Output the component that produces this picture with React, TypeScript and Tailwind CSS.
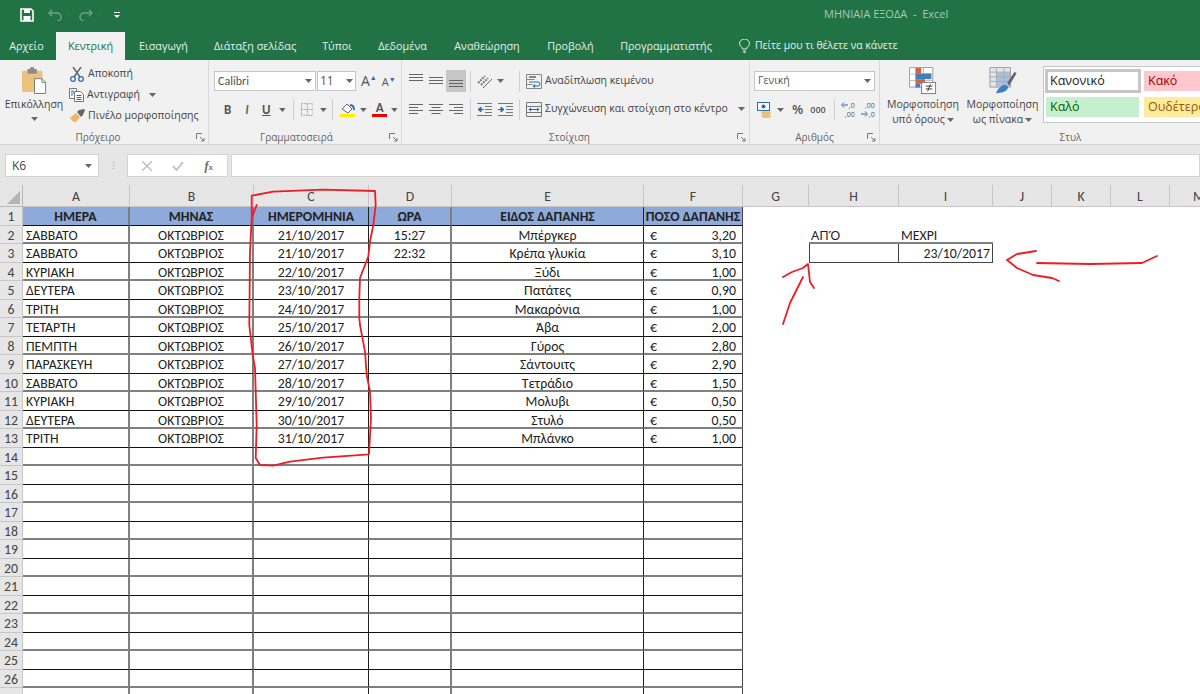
import React from "react";

const ui = { fontFamily: '"Open Sans","Noto Sans",sans-serif' };
const sheet = { fontFamily: 'Carlito,"Lato","Noto Sans",sans-serif' };

const Caret = ({ className = "" }: { className?: string }) => (
  <svg width="7" height="4" viewBox="0 0 7 4" className={className}><path d="M0 0h7L3.5 4z" fill="#666" /></svg>
);

const Launcher = () => (
  <svg width="9" height="9" viewBox="0 0 9 9" className="shrink-0"><path d="M.5 6V.5H6M4 4l4 4M8 5v3H5" stroke="#777" fill="none" /></svg>
);

const Lines = ({ kind }: { kind: "l" | "c" | "r" }) => {
  const w = [14, 9, 14, 9];
  return (
    <svg width="14" height="12" viewBox="0 0 14 12">
      {w.map((v, i) => {
        const x = kind === "l" ? 0 : kind === "r" ? 14 - v : (14 - v) / 2;
        return <path key={i} d={`M${x} ${1.5 + i * 3}h${v}`} stroke="#666" />;
      })}
    </svg>
  );
};

const VAlign = ({ y }: { y: number }) => (
  <svg width="14" height="14" viewBox="0 0 14 14">
    {[0, 3, 6].map((d) => <path key={d} d={`M0 ${y + d + .5}h14`} stroke="#666" />)}
  </svg>
);

const Indent = ({ flip }: { flip?: boolean }) => (
  <svg width="15" height="13" viewBox="0 0 15 13">
    <path d="M0 .5h15M8 3.5h7M8 6.5h7M8 9.5h7M0 12.5h15" stroke="#777" />
    {flip
      ? <path d="M0 6.5h5M3 4l3 2.500-3 2.500z" stroke="#2b6cb0" fill="#2b6cb0" />
      : <path d="M2 6.500h5M4 4L1 6.500 4 9z" stroke="#2b6cb0" fill="#2b6cb0" />}
  </svg>
);

const Sep = () => <div className="w-px h-[21px] bg-[#d0d0d0]" />;

const PasteIcon = () => (
  <svg width="25" height="28" viewBox="0 0 27 30">
    <rect x="0" y="4" width="22" height="23" rx="1" fill="#eac27b" />
    <rect x="6" y="2" width="10" height="5" fill="#8a8a8a" />
    <rect x="9" y="0" width="4" height="3" fill="#8a8a8a" />
    <path d="M13.500 12.500h8l4 4v12h-12z" fill="#fff" stroke="#777" />
    <path d="M21.500 12.500v4h4" fill="none" stroke="#777" />
  </svg>
);

const CutIcon = () => (
  <svg width="14" height="15" viewBox="0 0 14 15">
    <path d="M3 0l7 10M11 0L4 10" stroke="#666" strokeWidth="1.500" />
    <circle cx="3" cy="12" r="2.300" fill="none" stroke="#2b6cb0" strokeWidth="1.300" />
    <circle cx="11" cy="12" r="2.300" fill="none" stroke="#2b6cb0" strokeWidth="1.300" />
  </svg>
);

const CopyIcon = () => (
  <svg width="15" height="14" viewBox="0 0 15 14">
    <path d="M.5.500h7v10h-7z" fill="#fff" stroke="#777" />
    <path d="M5.500 3.500h6l3 3v7h-9z" fill="#fff" stroke="#777" />
    <path d="M2 3h3M2 5h3M2 7h2M7.500 7.500h5M7.500 9.500h5M7.500 11.500h5" stroke="#2b6cb0" />
  </svg>
);

const BrushIcon = () => (
  <svg width="15" height="14" viewBox="0 0 15 14">
    <path d="M0 9l6-5 4 4-5 6c-1-1-1-2-1-2l-2 0c0-1-1-2-2-3z" fill="#e9b767" />
    <path d="M7 3l2-2 5-1 1 1-2 5-2 2z" fill="#666" />
  </svg>
);

const WrapIcon = () => (
  <svg width="16" height="15" viewBox="0 0 16 15">
    <path d="M.5.500h15v14H.500z" fill="none" stroke="#888" />
    <path d="M.5 5.500h8M.5 10.500h6" stroke="#888" />
    <rect x="3" y="2" width="7" height="2" fill="#888" />
    <path d="M3 8h9a2 2 0 0 1 0 4H8" stroke="#2b6cb0" fill="none" />
    <path d="M9 10l-2.500 2L9 14z" fill="#2b6cb0" />
  </svg>
);

const MergeIcon = () => (
  <svg width="16" height="15" viewBox="0 0 16 15">
    <path d="M.5.500h15v14H.500zM.5 4.500h15M.5 10.500h15" fill="none" stroke="#777" />
    <path d="M3 7.500h10" stroke="#2b6cb0" />
    <path d="M5 5.500l-2.500 2 2.500 2zM11 5.500l2.500 2-2.500 2z" fill="#2b6cb0" />
  </svg>
);

const CondIcon = () => (
  <svg width="28" height="28" viewBox="0 0 30 30">
    <path d="M.5.500h25v21H.500z" fill="#fff" stroke="#999" />
    <path d="M7.500.5v21M15.500.5v21M.5 7.500h25M.5 14.500h25" stroke="#bbb" />
    <rect x="7" y="1" width="6" height="6" fill="#d9603b" />
    <rect x="7" y="7" width="17" height="6" fill="#3e7fc1" />
    <rect x="7" y="13" width="10" height="5" fill="#d9603b" />
    <rect x="7" y="18" width="5" height="4" fill="#3e7fc1" />
    <rect x="13.500" y="16.500" width="15" height="12" fill="#fff" stroke="#777" />
    <path d="M18 20.500h7M18 23.500h7M23 18.500l-3 7.500" stroke="#333" />
  </svg>
);

const TableIcon = () => (
  <svg width="28" height="28" viewBox="0 0 29 30">
    <path d="M.5.500h22v21H.500z" fill="#dfe6f0" stroke="#999" />
    <rect x="7" y="6" width="15" height="15" fill="#a9c0de" />
    <path d="M7.500.5v21M15.500.5v21M.5 5.500h22M.5 10.500h22M.5 15.500h22" stroke="#aaa" />
    <path d="M19 17L27 5l2 2-8 13z" fill="#666" />
    <path d="M7 28c2-5 6-9 10-9l3 2c0 4-4 7-13 7z" fill="#3e7fc1" />
  </svg>
);

const tabs: [string, string][] = [
  ["Εισαγωγή", "w-[75px]"],
  ["Διάταξη σελίδας", "w-[108px]"],
  ["Τύποι", "w-[56px]"],
  ["Δεδομένα", "w-[75px]"],
  ["Αναθεώρηση", "w-[94px]"],
  ["Προβολή", "w-[73px]"],
  ["Προγραμματιστής", "w-[118px]"],
];

const colHeads = ["A", "B", "C", "D", "E", "F", "G", "H", "I", "J", "K", "L", "M"];

const data: [string, string, string, string, string][] = [
  ["ΣΑΒΒΑΤΟ", "21/10/2017", "15:27", "Μπέργκερ", "3,20"],
  ["ΣΑΒΒΑΤΟ", "21/10/2017", "22:32", "Κρέπα γλυκία", "3,10"],
  ["ΚΥΡΙΑΚΗ", "22/10/2017", "", "Ξύδι", "1,00"],
  ["ΔΕΥΤΕΡΑ", "23/10/2017", "", "Πατάτες", "0,90"],
  ["ΤΡΙΤΗ", "24/10/2017", "", "Μακαρόνια", "1,00"],
  ["ΤΕΤΑΡΤΗ", "25/10/2017", "", "Άβα", "2,00"],
  ["ΠΕΜΠΤΗ", "26/10/2017", "", "Γύρος", "2,80"],
  ["ΠΑΡΑΣΚΕΥΗ", "27/10/2017", "", "Σάντουιτς", "2,90"],
  ["ΣΑΒΒΑΤΟ", "28/10/2017", "", "Τετράδιο", "1,50"],
  ["ΚΥΡΙΑΚΗ", "29/10/2017", "", "Μολυβι", "0,50"],
  ["ΔΕΥΤΕΡΑ", "30/10/2017", "", "Στυλό", "0,50"],
  ["ΤΡΙΤΗ", "31/10/2017", "", "Μπλάνκο", "1,00"],
];

const colLine = [
  "border-r-2 border-r-[#7f7f7f]",
  "border-r-2 border-r-[#7f7f7f]",
  "border-r border-r-[#222]",
  "border-r-2 border-r-[#7f7f7f]",
  "border-r border-r-[#222]",
  "border-r border-r-[#444]",
];
const rowLine = (n: number) => (n % 2 === 0 ? "border-b-2 border-b-[#7f7f7f]" : "border-b border-b-[#111]");

const cell = "px-[3px] leading-[19px] whitespace-nowrap overflow-hidden";
const head = "bg-[#8eaadb] font-bold text-center leading-[19px] whitespace-nowrap overflow-hidden";
const rowHead = "bg-[#e6e6e6] border-r border-b border-[#c6c6c6] text-center text-[#444] leading-[19px]";

const GroupLabel = ({ text, pad }: { text: string; pad: string }) => (
  <div className="h-[17px] pt-[3px] flex items-center text-[10px]">
    <div className={`flex-1 text-center text-[#666] ${pad}`}>{text}</div>
    <Launcher />
  </div>
);

const Ribbon = () => (
  <div className="flex h-[85px] bg-[#f1f1f1] border-b border-[#d2d2d2] text-[#444] text-[10.5px]" style={ui}>
    {/* Πρόχειρο */}
    <div className="w-[209px] flex flex-col border-r border-[#d8d8d8] pr-[3px]">
      <div className="flex-1 min-h-0 flex">
        <div className="w-[68px] flex flex-col items-center pt-[7px]">
          <PasteIcon />
          <div className="mt-[2px] leading-[15px]">Επικόλληση</div>
          <Caret className="mt-[5px]" />
        </div>
        <div className="flex flex-col pt-[5px] gap-[3px]">
          <div className="flex items-center gap-[4px] h-[18px] ml-[2px]"><CutIcon />Αποκοπή</div>
          <div className="flex items-center gap-[3px] h-[18px] ml-[1px]"><CopyIcon />Αντιγραφή<Caret className="ml-[6px]" /></div>
          <div className="flex items-center gap-[3px] h-[18px] ml-[2px]"><BrushIcon /><span className="whitespace-nowrap">Πινέλο μορφοποίησης</span></div>
        </div>
      </div>
      <GroupLabel text="Πρόχειρο" pad="" />
    </div>

    {/* Γραμματοσειρά */}
    <div className="w-[193px] flex flex-col border-r border-[#d8d8d8] pr-[3px]">
      <div className="flex-1 min-h-0 pl-[5px] pt-[11px]">
        <div className="flex items-center h-[20px]">
          <div className="w-[102px] h-[20px] bg-white border border-[#c6c6c6] flex items-center justify-between px-[3px] text-[#555]" style={sheet}>
            <span className="text-[12px]">Calibri</span><Caret />
          </div>
          <div className="w-[39px] ml-[1px] h-[20px] bg-white border border-[#c6c6c6] flex items-center justify-between px-[2px] text-[#555]">
            <span className="text-[12px]">11</span><Caret />
          </div>
          <span className="ml-[5px] text-[14px] text-[#555] leading-none">A<span className="text-[#2b6cb0] text-[7px] align-top">▲</span></span>
          <span className="ml-[5px] text-[11px] text-[#555] leading-none">A<span className="text-[#2b6cb0] text-[7px] align-top">▼</span></span>
        </div>
        <div className="flex items-center h-[21px] mt-[8px] pl-[4px] text-[#555]" style={sheet}>
          <span className="w-[20px] text-center font-bold text-[13px]">B</span>
          <span className="w-[20px] text-center italic font-bold text-[13px] text-[#666]">I</span>
          <span className="w-[20px] text-center font-bold underline text-[13px]">U</span>
          <Caret className="ml-[3px]" />
          <div className="ml-[7px]"><Sep /></div>
          <svg width="13" height="13" viewBox="0 0 13 13" className="ml-[7px]"><path d="M.5.500h12v12H.500z" fill="none" stroke="#999" strokeDasharray="1.500 1" /><path d="M6.500.5v12M.5 6.500h12" stroke="#999" strokeDasharray="1.500 1" /></svg>
          <Caret className="ml-[7px]" />
          <div className="ml-[5px]"><Sep /></div>
          <div className="ml-[7px] w-[16px] flex flex-col items-center">
            <svg width="14" height="11" viewBox="0 0 14 11"><path d="M1 6l5-5 5 5-4 4z" fill="#fff" stroke="#666" /><path d="M9 2c3 0 4 2 4 5" stroke="#2b6cb0" strokeWidth="2" fill="none" /></svg>
            <div className="w-[15px] h-[3px] bg-[#ffee00]" />
          </div>
          <Caret className="ml-[5px]" />
          <div className="ml-[5px] w-[15px] flex flex-col items-center">
            <span className="text-[13px] leading-[11px] font-bold text-[#555]">A</span>
            <div className="w-[15px] h-[3px] bg-[#f00000] mt-[1px]" />
          </div>
          <Caret className="ml-[4px]" />
        </div>
      </div>
      <GroupLabel text="Γραμματοσειρά" pad="pr-[5px]" />
    </div>

    {/* Στοίχιση */}
    <div className="w-[348px] flex flex-col border-r border-[#d8d8d8] pr-[3px]">
      <div className="flex-1 min-h-0 flex pt-[10px]">
        <div className="flex flex-col">
          <div className="flex items-center h-[22px] pl-[4px]">
            <div className="w-[20px] flex justify-center"><VAlign y={0} /></div>
            <div className="w-[20px] flex justify-center"><VAlign y={3} /></div>
            <div className="w-[20px] h-[22px] bg-[#c6c6c6] flex items-center justify-center"><VAlign y={6} /></div>
            <div className="ml-[4px]"><Sep /></div>
            <svg width="16" height="16" viewBox="0 0 16 16" className="ml-[6px]"><path d="M1 10l7-7M4 12l7-7" stroke="#777" strokeWidth="2" strokeDasharray="2 1" /><path d="M6 15l9-9" stroke="#666" /></svg>
            <Caret className="ml-[4px]" />
            <div className="ml-[15px]"><Sep /></div>
          </div>
          <div className="flex items-center h-[22px] mt-[6px] pl-[4px]">
            <div className="w-[20px] flex justify-center"><Lines kind="l" /></div>
            <div className="w-[20px] flex justify-center"><Lines kind="c" /></div>
            <div className="w-[20px] flex justify-center"><Lines kind="r" /></div>
            <div className="ml-[4px]"><Sep /></div>
            <div className="ml-[6px]"><Indent /></div>
            <div className="ml-[6px]"><Indent flip /></div>
            <div className="ml-[6px]"><Sep /></div>
          </div>
        </div>
        <div className="flex flex-col pl-[6px]">
          <div className="flex items-center h-[22px] gap-[3px]"><WrapIcon /><span className="whitespace-nowrap">Αναδίπλωση κειμένου</span></div>
          <div className="flex items-center h-[22px] mt-[6px] gap-[3px]"><MergeIcon /><span className="whitespace-nowrap">Συγχώνευση και στοίχιση στο κέντρο</span><Caret className="ml-[7px]" /></div>
        </div>
      </div>
      <GroupLabel text="Στοίχιση" pad="" />
    </div>

    {/* Αριθμός */}
    <div className="w-[130px] flex flex-col border-r border-[#d8d8d8] pr-[3px]">
      <div className="flex-1 min-h-0 pl-[4px] pt-[11px]">
        <div className="w-[121px] h-[20px] bg-white border border-[#c6c6c6] flex items-center justify-between px-[3px] text-[#555]">
          <span>Γενική</span><Caret />
        </div>
        <div className="flex items-center h-[21px] mt-[8px] text-[#555]">
          <svg width="15" height="16" viewBox="0 0 15 16" className="ml-[3px]"><rect x=".5" y=".5" width="12" height="8" fill="#fff" stroke="#2b6cb0" /><circle cx="6.500" cy="4.500" r="2" fill="#2b6cb0" /><ellipse cx="9" cy="11" rx="5" ry="2" fill="#eac27b" /><ellipse cx="9" cy="14" rx="5" ry="2" fill="#eac27b" /></svg>
          <Caret className="ml-[5px]" />
          <span className="ml-[8px] text-[13px] font-semibold">%</span>
          <span className="ml-[7px] text-[9px] font-semibold">000</span>
          <div className="ml-[8px]"><Sep /></div>
          <div className="ml-[5px] w-[15px] flex flex-col text-[7px] leading-[9px]">
            <div className="flex items-center justify-end gap-[1px]">
              <svg width="7" height="6" viewBox="0 0 7 6"><path d="M7 3H2M3 0.500L.5 3 3 5.500" stroke="#2b6cb0" fill="none" /></svg>
              <span>,0</span>
            </div>
            <div className="text-right">,00</div>
          </div>
          <div className="ml-[5px] w-[15px] flex flex-col text-[7px] leading-[9px]">
            <div className="text-right">,00</div>
            <div className="flex items-center justify-end gap-[1px]">
              <svg width="7" height="6" viewBox="0 0 7 6"><path d="M0 3h5M4 .5L6.500 3 4 5.500" stroke="#2b6cb0" fill="none" /></svg>
              <span>,0</span>
            </div>
          </div>
        </div>
      </div>
      <GroupLabel text="Αριθμός" pad="pl-[12px]" />
    </div>

    {/* Στυλ */}
    <div className="flex-1 min-w-0 flex flex-col">
      <div className="flex-1 min-h-0 flex">
        <div className="w-[86px] flex flex-col items-center pt-[7px] leading-[15px]">
          <CondIcon />
          <div className="whitespace-nowrap mt-[2px]">Μορφοποίηση</div>
          <div className="whitespace-nowrap flex items-center gap-[2px]">υπό όρους<Caret /></div>
        </div>
        <div className="w-[73px] flex flex-col items-center pt-[7px] leading-[15px]">
          <TableIcon />
          <div className="whitespace-nowrap mt-[2px]">Μορφοποίηση</div>
          <div className="whitespace-nowrap flex items-center gap-[2px]">ως πίνακα<Caret /></div>
        </div>
        <div className="ml-[4px] mt-[6px] h-[57px] flex-1 min-w-0 bg-white border border-[#c6c6c6] border-r-0 pl-[2px] pt-[4px] overflow-hidden text-[12.5px]" style={ui}>
          <div className="grid grid-cols-[93px_93px] gap-x-[5px] gap-y-[6px] auto-rows-[20px] items-stretch">
            <div className="border-[3px] border-[#c6c6c6] -ml-[1px] -mr-[2px] -my-[2px] pl-[2px] leading-[17px] text-[#222]">Κανονικό</div>
            <div className="bg-[#ffc7ce] text-[#9c0006] pl-[4px] leading-[20px]">Κακό</div>
            <div className="bg-[#c6efce] text-[#006100] pl-[4px] leading-[20px]">Καλό</div>
            <div className="bg-[#ffeb9c] text-[#9c5700] pl-[4px] leading-[20px] whitespace-nowrap">Ουδέτερο</div>
          </div>
        </div>
      </div>
      <div className="h-[17px] pt-[3px] pl-[61px] flex items-center justify-center text-[#666] text-[10px]">Στυλ</div>
    </div>
  </div>
);

export default function App() {
  const rows = Array.from({ length: 14 }, (_, i) => i + 14);
  return (
    <div className="relative w-[1200px] h-[694px] overflow-hidden bg-white">
      {/* Title bar */}
      <div className="h-[32px] bg-[#217346] flex items-center text-[11px] pb-[3px]" style={ui}>
        <svg width="14" height="14" viewBox="0 0 14 14" className="ml-[20px]"><path d="M1 1h10l2 2v10H1z" fill="none" stroke="#fff" strokeWidth="1.600" /><rect x="4" y="1" width="6" height="4" fill="#fff" /><rect x="3.500" y="8" width="7" height="5" fill="#fff" /></svg>
        <svg width="14" height="12" viewBox="0 0 14 12" className="ml-[14px]"><path d="M1 4h8a4 4 0 0 1 0 8M4 1L1 4l3 3" fill="none" stroke="#6aa285" strokeWidth="1.500" /></svg>
        <Caret className="ml-[3px] opacity-40" />
        <svg width="14" height="12" viewBox="0 0 14 12" className="ml-[7px]"><path d="M13 4H5a4 4 0 0 0 0 8M10 1l3 3-3 3" fill="none" stroke="#6aa285" strokeWidth="1.500" /></svg>
        <Caret className="ml-[3px] opacity-40" />
        <svg width="6" height="6" viewBox="0 0 6 6" className="ml-[11px]"><path d="M0 .5h6" stroke="#fff" /><path d="M0 3h6L3 6z" fill="#fff" /></svg>
        <div className="ml-[704px] text-[#a9c9b6] whitespace-nowrap">ΜΗΝΙΑΙΑ ΕΞΟΔΑ&nbsp;&nbsp;-&nbsp;&nbsp;Excel</div>
      </div>

      {/* Tabs */}
      <div className="h-[28px] bg-[#217346] flex items-stretch text-[10.8px] text-[#e6f0ea]" style={ui}>
        <div className="w-[53px] flex items-center justify-center">Αρχείο</div>
        <div className="w-[69px] ml-[3px] bg-[#f1f1f1] text-[#217346] flex items-center justify-center">Κεντρική</div>
        <div className="flex ml-[1px]">
          {tabs.map(([t, w]) => (
            <div key={t} className={`${w} flex items-center justify-center whitespace-nowrap`}>{t}</div>
          ))}
        </div>
        <div className="flex items-center ml-[14px] gap-[5px] whitespace-nowrap text-[10.4px]">
          <svg width="11" height="14" viewBox="0 0 11 14"><path d="M3.500 10c0-2-3-3-3-5.500a5 4.500 0 0 1 10 0c0 2.500-3 3.500-3 5.500zM4 12h3M4.500 13.500h2" fill="none" stroke="#e6f0ea" /></svg>
          Πείτε μου τι θέλετε να κάνετε
        </div>
      </div>

      <Ribbon />

      {/* Formula bar */}
      <div className="h-[40px] bg-[#e6e6e6] flex items-center pt-[1px] text-[12px]" style={ui}>
        <div className="ml-[5px] w-[94px] h-[23px] bg-white border border-[#d4d4d4] flex items-center justify-between px-[6px] text-[#444]">
          <span>K6</span><Caret />
        </div>
        <div className="w-[28px] text-center text-[#999] text-[9px] leading-[9px] tracking-tight">⋮</div>
        <div className="w-[101px] h-[23px] bg-white border border-[#d4d4d4] flex items-center justify-around px-[4px] text-[#aaa]">
          <svg width="10" height="10" viewBox="0 0 10 10"><path d="M0 0l10 10M10 0L0 10" stroke="#bbb" strokeWidth="1.300" /></svg>
          <svg width="12" height="10" viewBox="0 0 12 10"><path d="M1 5l3.500 4L11 1" stroke="#bbb" strokeWidth="1.600" fill="none" /></svg>
          <span className="italic text-[12px] font-semibold text-[#666]" style={{ fontFamily: '"Liberation Serif",serif' }}>f<span className="text-[9px]">x</span></span>
        </div>
        <div className="ml-[3px] flex-1 h-[23px] bg-white border border-[#d4d4d4]" />
      </div>

      {/* Sheet */}
      <div className="grid grid-cols-[23px_107px_124px_115px_83px_192px_99px_66px_90px_94px_59px_59px_59px_59px] grid-rows-[22px] auto-rows-[18.5px] text-[13.8px] text-[#222]" style={sheet}>
        <div className="bg-[#e6e6e6] border-r border-b border-[#b8b8b8] overflow-hidden">
          <svg width="22" height="21" viewBox="0 0 22 21"><path d="M20 6v13H7z" fill="#b5b5b5" /></svg>
        </div>
        {colHeads.map((c) => (
          <div key={c} className="bg-[#e6e6e6] border-r border-b border-[#c6c6c6] text-center text-[#444] leading-[23px]">{c}</div>
        ))}

        <div className={rowHead}>1</div>
        {["ΗΜΕΡΑ", "ΜΗΝΑΣ", "ΗΜΕΡΟΜΗΝΙΑ", "ΩΡΑ", "ΕΙΔΟΣ ΔΑΠΑΝΗΣ", "ΠΟΣΟ ΔΑΠΑΝΗΣ"].map((h, c) => (
          <div key={h} className={`${head} ${colLine[c]} ${rowLine(1)}`}>{h}</div>
        ))}
        <div className="col-span-7" />

        {data.map((r, i) => {
          const n = i + 2;
          const line = rowLine(n);
          return (
            <React.Fragment key={i}>
              <div className={rowHead}>{n}</div>
              <div className={`${cell} ${colLine[0]} ${line}`}>{r[0]}</div>
              <div className={`${cell} ${colLine[1]} ${line} text-center`}>ΟΚΤΩΒΡΙΟΣ</div>
              <div className={`${cell} ${colLine[2]} ${line} text-center`}>{r[1]}</div>
              <div className={`${cell} ${colLine[3]} ${line} text-center`}>{r[2]}</div>
              <div className={`${cell} ${colLine[4]} ${line} text-center`}>{r[3]}</div>
              <div className={`${cell} ${colLine[5]} ${line} flex justify-between px-[6px]`}><span>€</span><span>{r[4]}</span></div>
              <div />
              {i === 0 ? (
                <>
                  <div className="px-[2px] leading-[19px] border-b-2 border-b-[#7f7f7f] text-[13px]" style={{ fontFamily: '"Noto Sans",sans-serif' }}>ΑΠΌ</div>
                  <div className="px-[2px] leading-[19px] border-b-2 border-b-[#7f7f7f]">ΜΕΧΡΙ</div>
                  <div className="col-span-4" />
                </>
              ) : i === 1 ? (
                <>
                  <div className="border-l border-r border-b border-[#444]" />
                  <div className="border-r border-b border-[#444] text-right px-[2px] leading-[19px]">23/10/2017</div>
                  <div className="col-span-4" />
                </>
              ) : (
                <div className="col-span-6" />
              )}
            </React.Fragment>
          );
        })}

        {rows.map((n) => (
          <React.Fragment key={n}>
            <div className={rowHead}>{n < 27 ? n : ""}</div>
            {colLine.map((v, c) => (
              <div key={c} className={`${cell} ${v} ${rowLine(n)}`} />
            ))}
            <div className="col-span-7" />
          </React.Fragment>
        ))}
      </div>

      {/* Red pen annotations over the sheet */}
      <svg width="1200" height="694" viewBox="0 0 1200 694" className="absolute left-0 top-0 pointer-events-none" fill="none" stroke="#ee1c25" strokeWidth="1.800" strokeLinecap="round" strokeLinejoin="round">
        <path d="M256.700 205L251.700 218M251.700 218L251.700 195.700L273 191.700L323 189.700L375 191L375.700 205L373.300 225L370 241.700L368.300 256.700L360 278L359.300 298L359.300 318L360 325L365 351.700L366.700 375L370 391.700L371 418L369 454.300L323 457.700L290 461.700L273 465.700L260 465L255.700 458L256.700 425L255 368L252.700 355L249.300 325L250 251.700L251.700 218" />
        <path d="M783 277L792 272L803 268L808 264L810 282L814 288" />
        <path d="M803 277L790 303L783 324" />
        <path d="M1036 251L1017 254L1007 260L1017 268L1033 275L1052 278L1059 281" />
        <path d="M1037 263L1090 264L1142 263L1157 256" />
      </svg>
    </div>
  );
}
